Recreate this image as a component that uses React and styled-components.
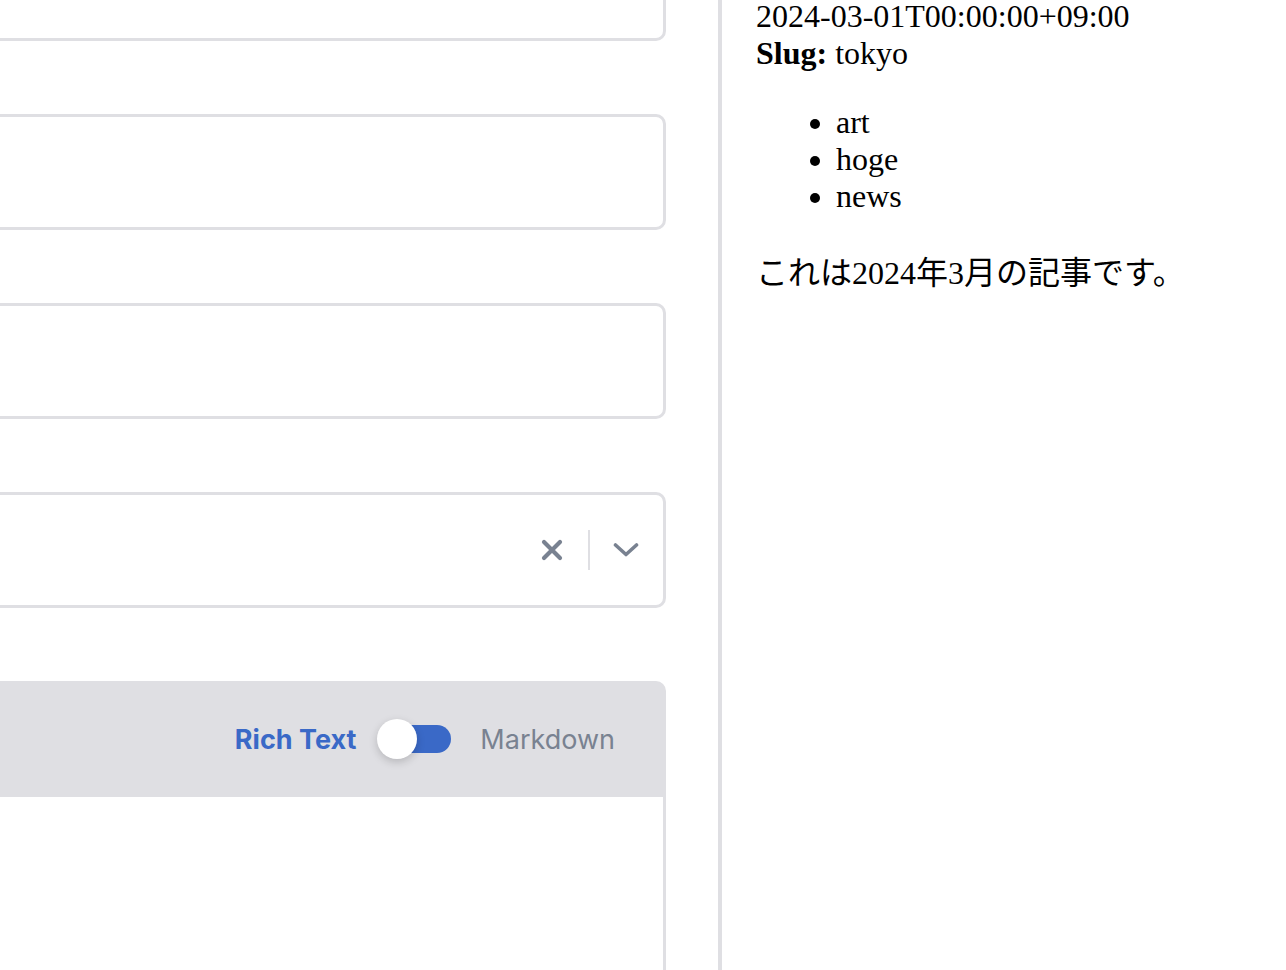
import React from 'react';
import styled, { createGlobalStyle } from 'styled-components';

const colors = {
  border: '#dfdfe3',
  blue: '#3a69c7',
  gray: '#798291',
  white: '#fff',
};

const GlobalStyle = createGlobalStyle`
  html, body {
    margin: 0;
    padding: 0;
    background: #fff;
    overflow: hidden;
  }
`;

const Layout = styled.div`
  display: flex;
  height: 970px;
  overflow: hidden;
`;

const ControlPane = styled.div`
  width: 718px;
  flex-shrink: 0;
  overflow: hidden;
  padding-right: 52px;
  box-sizing: border-box;
`;

const Controls = styled.div`
  display: flex;
  flex-direction: column;
  gap: 73px;
  margin-top: -75px;
  margin-left: -40px;
`;

const TextField = styled.div`
  height: 116px;
  box-sizing: border-box;
  border: 3px solid ${colors.border};
  border-radius: 10px;
  background: ${colors.white};
  display: flex;
  align-items: center;
  justify-content: flex-end;
`;

const SelectIndicators = styled.div`
  display: flex;
  align-items: center;
  height: 40px;
  padding-right: 23px;
`;

const IndicatorButton = styled.span`
  display: flex;
  align-items: center;
  justify-content: center;
  width: 28px;
  color: ${colors.gray};
`;

const IndicatorSeparator = styled.span`
  width: 2px;
  height: 40px;
  background: ${colors.border};
  margin: 0 22px;
`;

const EditorWrap = styled.div`
  display: flex;
  flex-direction: column;
`;

const Toolbar = styled.div`
  height: 116px;
  background: ${colors.border};
  border-radius: 0 10px 0 0;
  display: flex;
  align-items: center;
  justify-content: flex-end;
  padding-right: 51px;
  font-family: Inter, "Noto Sans", sans-serif;
  font-size: 27px;
`;

const ModeLabel = styled.span`
  color: ${p => (p.$active ? colors.blue : colors.gray)};
  font-weight: ${p => (p.$active ? 700 : 400)};
`;

const Toggle = styled.span`
  position: relative;
  display: inline-block;
  width: 74px;
  height: 28px;
  margin: 0 29px 0 21px;
`;

const ToggleTrack = styled.span`
  position: absolute;
  left: 6px;
  right: 0;
  top: 0;
  bottom: 0;
  border-radius: 14px;
  background: ${colors.blue};
`;

const ToggleKnob = styled.span`
  position: absolute;
  left: 0;
  top: -6px;
  width: 40px;
  height: 40px;
  border-radius: 50%;
  background: ${colors.white};
  box-shadow: 0 3px 8px rgba(0, 0, 0, 0.18);
`;

const EditorBody = styled.div`
  height: 300px;
  border-right: 3px solid ${colors.border};
  border-left: 3px solid ${colors.border};
  background: ${colors.white};
`;

const Divider = styled.div`
  width: 4px;
  flex-shrink: 0;
  background: ${colors.border};
`;

const PreviewPane = styled.div`
  flex: 1;
  padding: 0 34px;
  font-family: "Liberation Serif", "Noto Sans CJK JP", serif;
  font-size: 32px;
  color: #000;
  overflow: hidden;
`;

const PreviewInner = styled.div`
  margin-top: -2px;
`;

const MetaLine = styled.div``;

const TagList = styled.ul`
  margin: 32px 0;
  padding-left: 80px;
`;

const Body = styled.p`
  margin: 32px 0;
`;

const ClearIcon = () => (
  <svg width="22" height="22" viewBox="0 0 22 22">
    <path d="M3 3 L19 19 M19 3 L3 19" stroke="currentColor" strokeWidth="4.2" strokeLinecap="round" fill="none" />
  </svg>
);

const ChevronIcon = () => (
  <svg width="26" height="16" viewBox="0 0 26 16">
    <path d="M2.5 3 L13 12.5 L23.5 3" stroke="currentColor" strokeWidth="3.6" strokeLinecap="round" strokeLinejoin="round" fill="none" />
  </svg>
);

const App = () => {
  return (
    <>
      <GlobalStyle />
      <Layout>
        <ControlPane>
          <Controls>
            <TextField />
            <TextField />
            <TextField />
            <TextField>
              <SelectIndicators>
                <IndicatorButton><ClearIcon /></IndicatorButton>
                <IndicatorSeparator />
                <IndicatorButton><ChevronIcon /></IndicatorButton>
              </SelectIndicators>
            </TextField>
            <EditorWrap>
              <Toolbar>
                <ModeLabel $active>Rich Text</ModeLabel>
                <Toggle>
                  <ToggleTrack />
                  <ToggleKnob />
                </Toggle>
                <ModeLabel>Markdown</ModeLabel>
              </Toolbar>
              <EditorBody />
            </EditorWrap>
          </Controls>
        </ControlPane>
        <Divider />
        <PreviewPane>
          <PreviewInner>
            <MetaLine>2024-03-01T00:00:00+09:00</MetaLine>
            <MetaLine><strong>Slug:</strong> tokyo</MetaLine>
            <TagList>
              <li>art</li>
              <li>hoge</li>
              <li>news</li>
            </TagList>
            <Body>これは2024年3月の記事です。</Body>
          </PreviewInner>
        </PreviewPane>
      </Layout>
    </>
  );
};

export default App;
